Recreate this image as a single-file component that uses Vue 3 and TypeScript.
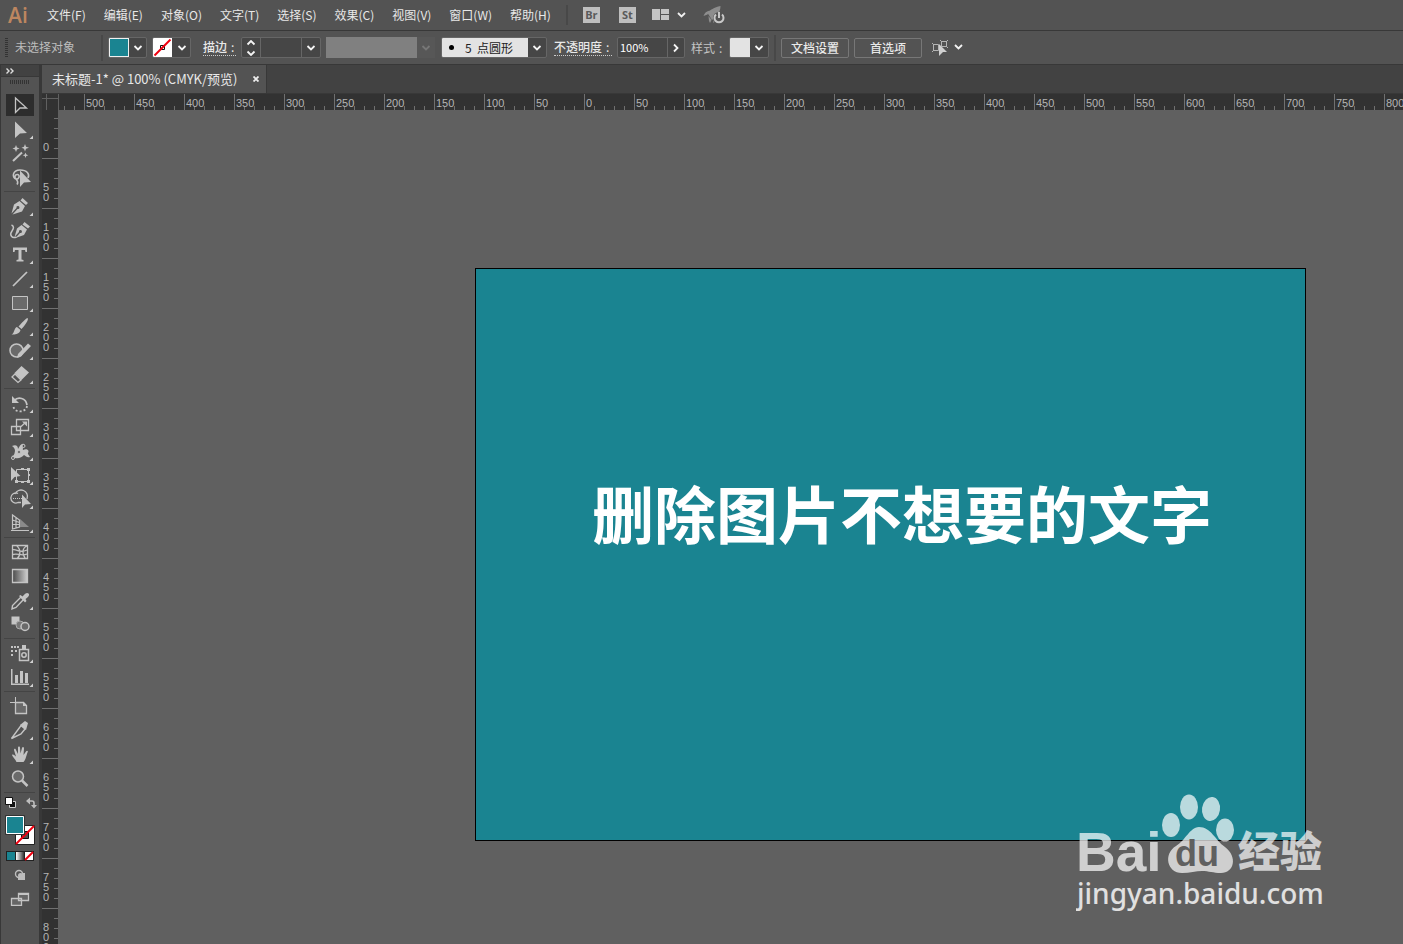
<script setup lang="ts">
import { computed, onMounted, onUnmounted, ref } from 'vue'

interface Tool {
  id: string
  name: string
  more?: boolean
}

const menus: string[] = ['文件(F)', '编辑(E)', '对象(O)', '文字(T)', '选择(S)', '效果(C)', '视图(V)', '窗口(W)', '帮助(H)']

const groups: Tool[][] = [
  [
    { id: 'select', name: '选择工具' },
    { id: 'direct', name: '直接选择工具', more: true },
    { id: 'wand', name: '魔棒工具' },
    { id: 'lasso', name: '套索工具' },
  ],
  [
    { id: 'pen', name: '钢笔工具', more: true },
    { id: 'curve', name: '曲率工具' },
    { id: 'type', name: '文字工具', more: true },
    { id: 'line', name: '直线段工具', more: true },
    { id: 'rect', name: '矩形工具', more: true },
    { id: 'brush', name: '画笔工具', more: true },
    { id: 'shaper', name: 'Shaper 工具', more: true },
    { id: 'eraser', name: '橡皮擦工具', more: true },
  ],
  [
    { id: 'rotate', name: '旋转工具', more: true },
    { id: 'scale', name: '比例缩放工具', more: true },
    { id: 'width', name: '宽度工具', more: true },
    { id: 'transform', name: '自由变换工具', more: true },
    { id: 'builder', name: '形状生成器工具', more: true },
    { id: 'perspective', name: '透视网格工具', more: true },
  ],
  [
    { id: 'mesh', name: '网格工具' },
    { id: 'gradient', name: '渐变工具' },
    { id: 'eyedropper', name: '吸管工具', more: true },
    { id: 'blend', name: '混合工具' },
  ],
  [
    { id: 'spray', name: '符号喷枪工具', more: true },
    { id: 'graph', name: '柱形图工具', more: true },
  ],
  [
    { id: 'artboard', name: '画板工具' },
    { id: 'slice', name: '切片工具', more: true },
    { id: 'hand', name: '抓手工具', more: true },
    { id: 'zoom', name: '缩放工具' },
  ],
]

const activeTool = ref('select')
const opacity = ref('100%')
const strokeWidth = ref('')
const brush = ref('round5')

const viewWidth = ref(window.innerWidth)
const viewHeight = ref(window.innerHeight)
const onResize = () => {
  viewWidth.value = window.innerWidth
  viewHeight.value = window.innerHeight
}
onMounted(() => window.addEventListener('resize', onResize))
onUnmounted(() => window.removeEventListener('resize', onResize))

const hMarks = computed<number[]>(() =>
  Array.from({ length: Math.ceil((viewWidth.value - 84) / 50) }, (_, i) => Math.abs(i * 50 - 500)),
)
const vMarks = computed<string[][]>(() =>
  Array.from({ length: Math.ceil((viewHeight.value - 110) / 50) }, (_, i) => String(i * 50).split('')),
)
</script>

<template>
  <div class="app">
    <header class="menubar">
      <span class="logo">Ai</span>
      <nav class="menus">
        <button v-for="m in menus" :key="m" type="button">{{ m }}</button>
      </nav>
      <i class="divider"></i>
      <button class="badge" type="button">Br</button>
      <button class="badge second" type="button">St</button>
      <button class="arrange" type="button" aria-label="排列文档">
        <svg width="34" height="14" viewBox="0 0 34 14">
          <path fill="#c4c4c4" d="M0 1h8v11H0zM9 1h8v5H9zM9 7h8v5H9z" />
          <path fill="none" stroke="#f0f0f0" stroke-width="1.8" d="M26 5l3.500 3.500L33 5" />
        </svg>
      </button>
      <button class="gpu" type="button" aria-label="GPU 性能">
        <svg width="22" height="18" viewBox="0 0 22 18">
          <path fill="#8d8d8d" d="M17.500 0C11 1.500 7 4 4.500 7L9 14C14 11 17.500 6 17.500 0zM7 4.500C3.500 5 1.500 7 .5 10l4-1.500zM5.500 10l3 4-1.500 3-1-2zM11 13l-1 4 3-2z" />
          <circle cx="16" cy="12" r="6" fill="#535353" />
          <path fill="none" stroke="#c8c8c8" stroke-width="2" d="M13 8.500a4.500 4.500 0 1 0 6 0M16 6v6" />
        </svg>
      </button>
    </header>

    <section class="control">
      <i class="grip"></i>
      <span class="status">未选择对象</span>
      <i class="divider low"></i>
      <div class="combo fill">
        <button class="chip teal" type="button" aria-label="填色"></button>
        <button class="drop" type="button" aria-label="填色选项"><svg width="10" height="6" viewBox="0 0 10 6"><path d="M1.500 1L5 4.500 8.500 1" /></svg></button>
      </div>
      <div class="combo stroke">
        <button class="chip none" type="button" aria-label="描边颜色">
          <svg width="19" height="19" viewBox="0 0 19 19"><path fill="#fff" d="M0 0h19v19H0z" /><path fill="none" stroke="#111" d="M7.500 7.500h4v4h-4z" /><path stroke="#f00010" stroke-width="2" d="M1.500 17.500l16-16" /></svg>
        </button>
        <button class="drop" type="button" aria-label="描边颜色选项"><svg width="10" height="6" viewBox="0 0 10 6"><path d="M1.500 1L5 4.500 8.500 1" /></svg></button>
      </div>
      <label class="link weight-label" for="stroke-width">描边<b>:</b></label>
      <div class="combo weight">
        <button class="step" type="button" aria-label="调整描边粗细"><svg width="10" height="16" viewBox="0 0 10 16"><path d="M1.500 4.500L5 1l3.500 3.500M1.500 11.500L5 15l3.500-3.500" /></svg></button>
        <input id="stroke-width" v-model="strokeWidth" type="text" />
        <button class="drop" type="button" aria-label="描边粗细选项"><svg width="10" height="6" viewBox="0 0 10 6"><path d="M1.500 1L5 4.500 8.500 1" /></svg></button>
      </div>
      <div class="profile">
        <span></span>
        <button type="button" disabled aria-label="变量宽度配置文件"><svg width="10" height="6" viewBox="0 0 10 6"><path d="M1.500 1L5 4.500 8.500 1" /></svg></button>
      </div>
      <div class="combo brush">
        <i class="dot"></i>
        <select v-model="brush" aria-label="画笔定义"><option value="round5">5&nbsp; 点圆形</option></select>
        <span class="drop"><svg width="10" height="6" viewBox="0 0 10 6"><path d="M1.500 1L5 4.500 8.500 1" /></svg></span>
      </div>
      <label class="link opacity-label" for="opacity">不透明度<b>:</b></label>
      <div class="combo opacity">
        <input id="opacity" v-model="opacity" type="text" />
        <button class="drop" type="button" aria-label="不透明度选项"><svg width="6" height="10" viewBox="0 0 6 10"><path d="M1 1.500L4.500 5 1 8.500" /></svg></button>
      </div>
      <span class="plain">样式<b>:</b></span>
      <div class="combo style">
        <button class="chip light" type="button" aria-label="图形样式"></button>
        <button class="drop" type="button" aria-label="图形样式选项"><svg width="10" height="6" viewBox="0 0 10 6"><path d="M1.500 1L5 4.500 8.500 1" /></svg></button>
      </div>
      <i class="divider low"></i>
      <button class="push" type="button">文档设置</button>
      <button class="push" type="button">首选项</button>
      <button class="similar" type="button" aria-label="选择类似的对象">
        <svg width="32" height="18" viewBox="0 0 32 18">
          <path fill="none" stroke="#b4b4b4" d="M1.500 5.500h5v6h-5zM9.500 2.500h5v5h-5zM0 4l2 2M0 13l2-2M8 1l2 2M16 1l-2 2M16 9l-2-2" />
          <path fill="#d0d0d0" d="M7 5l8 8H11l-4 4z" />
          <path class="mark" d="M23 6l3.500 3.500L30 6" />
        </svg>
      </button>
    </section>

    <div class="body">
      <aside class="tools">
        <div class="expand"><svg width="8" height="6" viewBox="0 0 8 6"><path fill="none" stroke="#ddd" stroke-width="1.400" d="M.5.500L3 3 .5 5.500M4.500.5L7 3 4.500 5.500" /></svg></div>
        <div class="handle"><i></i></div>
        <div v-for="(group, gi) in groups" :key="gi" class="group">
          <button
            v-for="t in group"
            :key="t.id"
            type="button"
            class="tool"
            :class="{ active: t.id === activeTool }"
            :aria-label="t.name"
            @click="activeTool = t.id"
          >
            <svg class="icon" width="36" height="24" viewBox="0 0 36 24">
              <path v-if="t.id === 'select'" class="l" stroke-width="1.300" d="M13.500 4v14.500l4.500-4.500h6.500z" />
              <path v-else-if="t.id === 'direct'" class="f" d="M13 3.500V20l5-4.500 7-.500z" />
              <g v-else-if="t.id === 'wand'">
                <path class="l w2" d="M11 19l9-8.500" />
                <path class="f" d="M14 3l1 2.500 2.500 1-2.500 1-1 2.500-1-2.500-2.500-1 2.500-1zM23 2l1 2.700 3 1-3 1-1 2.700-1-2.700-2.500-1 2.500-1zM23.500 10.500l.8 2 2 .8-2 .8-.8 2-.8-2-2-.8 2-.8z" />
              </g>
              <g v-else-if="t.id === 'lasso'">
                <path class="l" stroke-width="1.600" d="M26 12c2-4-1-8-8-8-8 0-8 8-4 9 3 .7 4.500-4 1.500-4.500-2.500-.3-3.500 3-1.500 4.500 2 2 2 4 1 5.500" />
                <path class="f" d="M18 4.500V21l4-4.500 7-.500z" />
              </g>
              <g v-else-if="t.id === 'pen'">
                <path class="f" d="M20.500 3l5.500 5-2 2-5.500-4.500zM17.500 6l5.500 5-3 5.500L10.500 19.500l5-5.500a1.500 1.500 0 1 0-1-1l-5 5.500 2.500-9z" />
              </g>
              <g v-else-if="t.id === 'curve'">
                <path class="f" d="M22.500 3l5.500 4.500-2 2-5.500-4zM19.500 6l5.500 4.500-3 5.500-8.500 3 4.500-5a1.500 1.500 0 1 0-1-1l-4.500 5 2.500-8.500z" />
                <path class="l" stroke-width="1.500" d="M9.500 6C12 7 12 9 10 12c-3 4 0 8 4.500 6" />
              </g>
              <path v-else-if="t.id === 'type'" class="f" d="M11 4.500h14V9h-1.500L23 7h-3.500v9.500l2 .5v1.500h-7V17l2-.500V7H13l-.5 2H11z" />
              <path v-else-if="t.id === 'line'" class="l" stroke-width="1.700" d="M11 19L25 5" />
              <path v-else-if="t.id === 'rect'" class="l shade" d="M10.500 5.500h15v13h-15z" />
              <path v-else-if="t.id === 'brush'" class="f" d="M25.500 3c2 1-3 8-6 11l-3-2.500c3-3.500 8-8.500 9-8.500zM15 12l3.500 3c-1 4-5.500 5-9 4.500 2-1 2-2 3-4.500.5-1.500 1.500-3 2.500-3z" />
              <g v-else-if="t.id === 'shaper'">
                <circle class="l shade" cx="14.500" cy="11.500" r="6.500" stroke-width="1.500" />
                <path class="f" d="M26 4.500l3 2.500L19 17.500l-4 1.500 1-4z" />
              </g>
              <g v-else-if="t.id === 'eraser'">
                <path class="f" d="M19.500 3l7.500 6.500-7.500 7.500-7-7z" />
                <path class="l" stroke-width="1.300" d="M13 11l6 6-3 2.500-6-5.500z" />
              </g>
              <g v-else-if="t.id === 'rotate'">
                <path class="l" stroke-width="1.800" d="M12 9c4-5 12-3 13 4" />
                <path class="l" stroke-width="1.800" stroke-dasharray="2 2" d="M25 14c-1 7-12 7-13.500 1" />
                <path class="f" d="M10 4v7h7z" />
              </g>
              <g v-else-if="t.id === 'scale'">
                <path class="l" stroke-width="1.300" d="M14.500 3.500h12v11h-12zM9.500 10.500h9v8h-9zM18 11.500l5.500-5" />
                <path class="f" d="M20 5.500h5v5z" />
              </g>
              <g v-else-if="t.id === 'width'">
                <path class="f" d="M10 6c4-2 6 0 6 3 2-3 3-6 6-5 2 1-2 4-1 6 2-1 5-1 5.500 1 .2 1.500-1 2-.5 3l2 3c-3 1-4-1-6-2-2 2-5 4-9 3-2 0-3-1-3.500-2 3 0 3-3 3.500-5 0-2-1-4-3-5z" />
                <path class="l" d="M11 19L22 5" /><circle class="h" cx="11" cy="18" r="1.500" /><circle class="h" cx="21.500" cy="6" r="1.500" /><circle class="h" cx="17" cy="12" r="1.500" />
              </g>
              <g v-else-if="t.id === 'transform'">
                <path class="l" d="M14.500 5.500h12v12h-12z" />
                <path class="f" d="M9 3v14l3.500-4 6-1zM13 16h3v3h-3zM25 16h3v3h-3zM25 4h3v3h-3zM19 4h3v2h-3zM19 17h3v2h-3zM26 10h2v2h-2z" />
              </g>
              <g v-else-if="t.id === 'builder'">
                <path class="l" stroke-width="1.300" d="M16 5.500a5 5 0 1 0 0 9h3M13 6a6 6 0 0 1 12 5" /><path class="l" stroke-dasharray="1 1" d="M11 10.500h12" />
                <path class="f" d="M20 6.500V20l3-3.500 6-.500z" />
              </g>
              <g v-else-if="t.id === 'perspective'">
                <path class="l" stroke-width="1.200" d="M10.500 3v14l7-2V8zM14 5v11M10.500 8l7 2.500M10.500 12.500h7M9 18.500h18" />
                <path fill="#8a8a8a" d="M18 7l9 8h-9z" />
              </g>
              <g v-else-if="t.id === 'mesh'">
                <path class="l" stroke-width="1.300" d="M10.500 4.500h15v13h-15zM14 4c5 4 5 10 1 14M25 5c-5 2-5 8-2 12M10 9c5-2 6 4 15 0M10 14c5-3 9 2 15-1" />
              </g>
              <g v-else-if="t.id === 'gradient'">
                <defs><linearGradient id="tool-gradient"><stop offset="0" stop-color="#4a4a4a" /><stop offset="1" stop-color="#cfcfcf" /></linearGradient></defs>
                <path fill="url(#tool-gradient)" stroke="#c4c4c4" stroke-width="1.300" d="M10.500 4.500h15v13h-15z" />
              </g>
              <g v-else-if="t.id === 'eyedropper'">
                <path class="l" stroke-width="1.400" d="M19 8l2.500 2.500-7.500 8-4 1.500.5-3.500z" />
                <path class="f" d="M17 7l1.500-1 2 1.500c3-4 5-4 6-3 1.500 1.500 0 3.500-3 5.500l1 2-1.500 1.500z" />
              </g>
              <g v-else-if="t.id === 'blend'">
                <path class="f" d="M9.500 3.500h8v8h-8z" /><circle cx="18" cy="12" r="4" fill="#777" stroke="#aaa" />
                <circle class="l shade" cx="23" cy="13.500" r="4" stroke-width="1.500" />
              </g>
              <g v-else-if="t.id === 'spray'">
                <path class="f" d="M9 4h2v2H9zM12 4h2v2h-2zM15 4h2v2h-2zM9 8h2v2H9zM13 8h2v2h-2zM9 12h2v2H9zM20 3h4v4h-4z" />
                <path class="l" stroke-width="1.500" d="M17.500 7.500h9v11h-9z" /><circle class="l" cx="22" cy="13" r="2.200" stroke-width="1.500" />
              </g>
              <path v-else-if="t.id === 'graph'" class="f" d="M9 3h1.500v14.500H27V19H9zM13 9h3v8h-3zM18 5h3v12h-3zM23 7h3v10h-3z" />
              <g v-else-if="t.id === 'artboard'">
                <path class="l" d="M13.500 2v6M8 7.500h5.500" /><path class="l shade" stroke-width="1.300" d="M13.500 7.500h8l3 3v8h-11z" /><path class="f" d="M21 7v4h4z" />
              </g>
              <g v-else-if="t.id === 'slice'">
                <path class="l" stroke-width="1.400" d="M19 6.500l4 3.500-4 5-9.500 4.500z" /><path class="f" d="M18 6l5-4 3 2-2 7z" />
              </g>
              <path v-else-if="t.id === 'hand'" class="f" d="M14.500 19c-1-3-4-5-4.500-7 1-1 2 0 4 1.500L12 7c0-1.500 1.500-2 2 0l2 4V4.500c0-1.500 2-1.500 2 0l.5 6 1.500-5.500c.5-1.500 2-1 2 .5L21.500 12 24 8.500c1-1.500 2.500-.5 1.500 1-1 2-1.500 7-4 9.500z" />
              <g v-else-if="t.id === 'zoom'">
                <circle class="l shade" cx="16" cy="9.500" r="5.500" stroke-width="1.500" /><path class="l" stroke-width="2.500" d="M20 13.500l5.500 5.500" />
              </g>
              <path v-if="t.more" fill="#d0d0d0" d="M31 17.500v3.500h-3.500z" />
            </svg>
          </button>
        </div>
        <div class="colors">
          <svg width="36" height="110" viewBox="0 0 36 110">
            <path fill="#111" stroke="#ccc" d="M7.500 5.500h6v6h-6z" />
            <path fill="#fff" stroke="#111" d="M3.500 1.500h7v7h-7z" />
            <path fill="none" stroke="#bdbdbd" stroke-width="1.600" d="M26 5h4c1.500 0 2 .5 2 2v3" />
            <path fill="#bdbdbd" d="M24 5l4-3.500v7zM29 9h6l-3 3.500z" />
            <path fill="#fff" stroke="#222" d="M13.500 29.500h19v19h-19z" />
            <path fill="#535353" stroke="#111" d="M19.500 35.500h7v7h-7z" />
            <path stroke="#f00010" stroke-width="2" d="M14 48l18-18" />
            <path fill="#1a8491" stroke="#fff" d="M4.500 20.500h17v17h-17z" />
            <path fill="none" stroke="#333" d="M3.500 19.500h19v19h-19z" />
            <defs><linearGradient id="mode-gradient"><stop offset="0" stop-color="#fff" /><stop offset="1" stop-color="#333" /></linearGradient></defs>
            <path fill="#222" d="M4 55h28v10H4z" />
            <path fill="#1a8491" d="M5 56h8v8H5z" /><path fill="url(#mode-gradient)" d="M14 56h8v8h-8z" /><path fill="#fff" d="M23 56h8v8h-8z" />
            <path stroke="#f00010" stroke-width="2" d="M23 64l8-8" />
            <circle cx="17" cy="78" r="3.500" fill="none" stroke="#bdbdbd" stroke-width="1.400" /><path fill="#bdbdbd" d="M21 77h2v7h-7v-2c3 0 5-2 5-5z" /><circle cx="18.500" cy="79.500" r="2.500" fill="#bdbdbd" />
            <path fill="#666" stroke="#c4c4c4" stroke-width="1.300" d="M9.500 102.500h10v7h-10zM16.500 97.500h10v7h-10z" /><path fill="#c4c4c4" d="M16 97h11v2H16z" />
          </svg>
        </div>
      </aside>

      <main class="work">
        <div class="tabs">
          <div class="tab">
            <span>未标题-1* @ 100% (CMYK/预览)</span>
            <button type="button" aria-label="关闭"><svg width="6" height="6" viewBox="0 0 6 6"><path stroke="#eee" stroke-width="1.800" d="M.5.500l5 5M5.500.5l-5 5" /></svg></button>
          </div>
        </div>
        <div class="hrow">
          <div class="corner"></div>
          <div class="hruler">
            <div class="hlead"></div>
            <div v-for="(n, i) in hMarks" :key="i" class="hmark">{{ n }}</div>
          </div>
        </div>
        <div class="vrow">
          <div class="vruler">
            <div v-for="(digits, i) in vMarks" :key="i" class="vmark">
              <span v-for="(d, j) in digits" :key="j">{{ d }}</span>
            </div>
          </div>
          <div class="canvas">
            <div class="artboard"><p>删除图片不想要的文字</p></div>
            <svg class="watermark" width="260" height="124" viewBox="0 0 260 124">
              <g fill="#fff" fill-opacity=".7">
                <text class="wm-bold" x="0" y="81">Bai</text>
                <path d="M123 37C113 38 110 50 100 56C87 64 91 83 106 83C114 83 120 81 126 81C133 81 137 83 145 83C158 83 162 67 149 57C139 50 135 37 123 37Z" />
                <ellipse cx="95" cy="35" rx="9" ry="12" /><ellipse cx="113" cy="17" rx="9" ry="12.500" /><ellipse cx="135" cy="19" rx="9" ry="12" transform="rotate(8 135 19)" /><ellipse cx="149" cy="40" rx="9" ry="11.500" />
                <text class="wm-cjk" x="162" y="77">经验</text>
              </g>
              <text class="wm-du" x="99" y="76">du</text>
              <text class="wm-url" x="1" y="114">jingyan.baidu.com</text>
            </svg>
          </div>
        </div>
      </main>
    </div>
  </div>
</template>

<style>
body {
  background: #606060;
  overflow: hidden;
}
</style>

<style scoped>
.app {
  height: 100vh;
  display: flex;
  flex-direction: column;
  background: #535353;
  color: #e8e8e8;
  font: 12px/16px "Noto Sans CJK SC", sans-serif;
  overflow: hidden;
}
.app * { box-sizing: border-box; }
button, input, select { font: inherit; color: inherit; background: none; border: 0; padding: 0; margin: 0; border-radius: 0; }
svg { display: block; flex: none; }
.menubar { height: 31px; flex: none; display: flex; align-items: center; border-bottom: 1px solid #383838; white-space: nowrap; }
.logo { width: 47px; padding-left: 8px; font: 600 21px/26px "Open Sans", sans-serif; color: #bd8660; flex: none; }
.menus { display: flex; gap: 18px; }
.divider { width: 2px; height: 20px; background: #484848; margin: 0 15px; flex: none; }
.badge { width: 17px; height: 16px; background: #bfbfbf; color: #5a5a5a; font: 700 11px/16px "Open Sans", sans-serif; text-align: center; flex: none; }
.second { margin-left: 19px; }
.arrange { margin-left: 16px; }
.gpu { margin-left: 17px; }
.control { height: 34px; flex: none; display: flex; align-items: center; gap: 5px; border-bottom: 1px solid #383838; padding-left: 5px; white-space: nowrap; }
.control > * { flex: none; }
.grip { width: 3px; height: 20px; background: repeating-linear-gradient(#333 0 1px, #535353 1px 2px); margin-right: 2px; }
.status { color: #bdbdbd; width: 81px; padding-bottom: 2px; }
.divider.low { height: 26px; margin: 0; }
.combo { height: 21px; display: flex; border: 1px solid #666; border-radius: 2px; background: #464646; overflow: hidden; }
.chip { width: 20px; }
.teal { background: #1a8491; border: 1px solid #f0f0f0; }
.light { background: #e3e3e3; }
.drop, .step { display: grid; place-items: center; flex: 1; }
.drop path, .step path, .profile path, .mark { fill: none; stroke: #f4f4f4; stroke-width: 1.8; }
.fill, .stroke { width: 39px; }
.link { border-bottom: 1px dotted #ccc; line-height: 16px; font-weight: 500; }
.link b, .plain b { margin-left: 4px; font-weight: 400; }
.weight-label { width: 33px; margin-left: 7px; }
.weight { width: 80px; }
.weight .step, .weight .drop { flex: 0 0 18px; }
.weight input { flex: 1; width: 0; border: solid #666; border-width: 0 1px; }
.profile { display: flex; height: 21px; width: 109px; background: #575757; }
.profile span { flex: 1; background: #808080; }
.profile button { width: 18px; display: grid; place-items: center; }
.profile path { stroke: #777; }
.brush { width: 106px; align-items: center; margin-left: 1px; position: relative; }
.brush select { appearance: none; background: #e3e3e3; color: #222; width: 86px; height: 19px; padding-left: 23px; line-height: 19px; }
.dot { position: absolute; left: 7px; top: 7px; width: 5px; height: 5px; border-radius: 50%; background: #000; }
.opacity-label { width: 58px; margin-left: 2px; }
.opacity { width: 68px; }
.opacity input { width: 50px; padding: 0 0 2px 2px; border-right: 1px solid #666; font-size: 11px; color: #fff; }
.plain { color: #c4c4c4; margin: 0 2px 0 1px; width: 31px; }
.style { width: 40px; }
.push { height: 20px; width: 68px; border: 1px solid #777; border-radius: 2px; font-weight: 500; line-height: 18px; }
.similar { margin-left: 5px; }
.body { flex: 1; min-height: 0; display: flex; }
.tools { width: 42px; flex: none; border: solid #383838; border-width: 0 3px 0 1px; background: #535353; }
.expand { height: 12px; background: #424242; padding: 3px 0 0 5px; border-bottom: 1px solid #383838; }
.handle { height: 17px; padding: 3px 0 0 9px; }
.handle i { display: block; width: 20px; height: 4px; background: repeating-linear-gradient(90deg, #333 0 1px, #535353 1px 2px); }
.group { padding-bottom: 5px; background: linear-gradient(#444, #444) 3px calc(100% - 3px) / 31px 1px no-repeat; }
.tool { display: block; width: 38px; height: 24px; padding-left: 1px; }
.tool.active { background: linear-gradient(#2d2d2d, #2d2d2d) 5px 0 / 28px 22px no-repeat; }
.f { fill: #c4c4c4; }
.l { fill: none; stroke: #c4c4c4; }
.shade { fill: #6a6a6a; }
.w2 { stroke-width: 2; }
.h { fill: #535353; stroke: #c4c4c4; }
.colors { padding-left: 1px; }
.work { flex: 1; min-width: 0; display: flex; flex-direction: column; background: #606060; }
.tabs { height: 29px; flex: none; background: #424242; display: flex; border-bottom: 1px solid #383838; }
.tab { background: #535353; display: flex; align-items: center; padding: 0 7px 0 10px; gap: 16px; border-right: 1px solid #383838; white-space: nowrap; font-size: 13px; }
.hrow { height: 16px; flex: none; display: flex; background: #323232; }
.corner { width: 17px; flex: none; border-right: 1px solid #606060; background: linear-gradient(#606060, #606060) 0 4px / 16px 1px no-repeat, linear-gradient(#606060, #606060) 4px 0 / 1px 16px no-repeat; }
.hruler { flex: 1; min-width: 0; overflow: hidden; display: flex; }
.hlead { width: 25px; flex: none; background: repeating-linear-gradient(90deg, transparent 0 5px, #707070 5px 6px, transparent 6px 10px) 0 12px / 24px 4px no-repeat; }
.hmark { width: 50px; height: 16px; flex: none; padding-left: 1px; border-left: 1px solid #707070; font: 11px/19px "Liberation Sans", Arial, sans-serif; color: #b4b4b4; background: repeating-linear-gradient(90deg, transparent 0 9px, #707070 9px 10px) 0 12px / 49px 4px no-repeat; }
.vrow { flex: 1; min-height: 0; display: flex; }
.vruler { width: 16px; flex: none; background: #323232; overflow: hidden; }
.vmark { height: 50px; display: flex; flex-direction: column; justify-content: flex-end; padding: 0 0 6px 1px; border-bottom: 1px solid #707070; font: 11px/10px "Liberation Sans", Arial, sans-serif; color: #b4b4b4; background: repeating-linear-gradient(transparent 0 9px, #707070 9px 10px) 12px 0 / 4px 49px no-repeat; }
.vmark:first-child { height: 49px; background-position: 12px -1px; }
.canvas { position: relative; flex: 1; min-width: 0; overflow: hidden; background: #606060; }
.artboard { position: absolute; left: 417px; top: 158px; width: 831px; height: 573px; border: 1px solid #000; background: #1a8491; display: flex; justify-content: center; padding: 198px 0 0 23px; }
.artboard p { margin: 0; font: 700 62px/90px "Noto Sans CJK SC", sans-serif; color: #fff; white-space: nowrap; }
.watermark { position: absolute; left: 1018px; top: 680px; }
.wm-bold { font: 700 55px "Liberation Sans", Arial, sans-serif; }
.wm-cjk { font: 900 42px "Noto Sans CJK SC", sans-serif; }
.wm-du { font: 700 36px "Liberation Sans", Arial, sans-serif; fill: #606060; }
.wm-url { font: 500 28px "Noto Sans", sans-serif; fill: #e0e0e0; }
</style>
